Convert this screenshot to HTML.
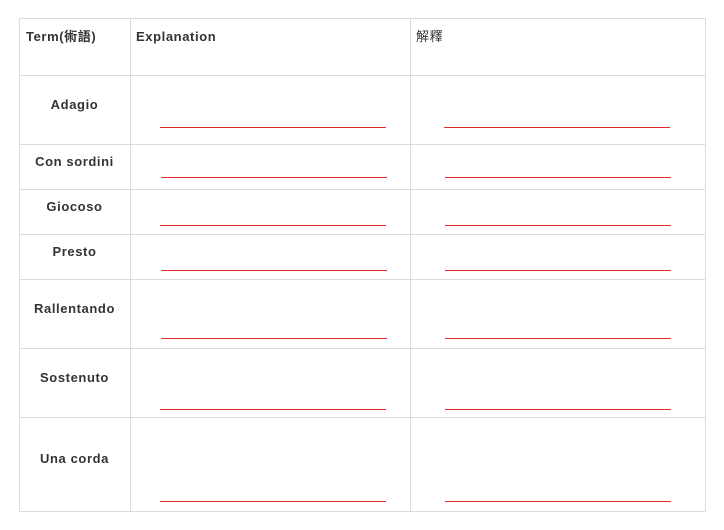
<!DOCTYPE html>
<html><head><meta charset="utf-8"><style>
html,body{margin:0;padding:0;background:#fff;width:724px;height:530px;overflow:hidden;position:relative}
.h,.v{position:absolute;background:#dcdcdc}
.h{height:1px;left:19px;width:687px}
.v{width:1px;top:18px;height:494px}
.r{position:absolute;height:1px;background:#e32b2b}
.t{position:absolute;font:bold 13px "Liberation Sans","Noto Sans CJK TC",sans-serif;color:#333;letter-spacing:0.6px;white-space:nowrap;line-height:16px}
.c{left:19px;width:111px;text-align:center}
</style></head><body>
<div class="h" style="top:18px"></div>
<div class="h" style="top:75px"></div>
<div class="h" style="top:144px"></div>
<div class="h" style="top:189px"></div>
<div class="h" style="top:234px"></div>
<div class="h" style="top:279px"></div>
<div class="h" style="top:348px"></div>
<div class="h" style="top:417px"></div>
<div class="h" style="top:511px"></div>
<div class="v" style="left:19px"></div>
<div class="v" style="left:130px"></div>
<div class="v" style="left:410px"></div>
<div class="v" style="left:705px"></div>

<div class="t" style="left:26px;top:29px">Term(術語)</div>
<div class="t" style="left:136px;top:29px">Explanation</div>
<div class="t" style="left:416px;top:29px;font-weight:normal">解釋</div>

<div class="t c" style="top:97px">Adagio</div>
<div class="t c" style="top:154px">Con sordini</div>
<div class="t c" style="top:199px">Giocoso</div>
<div class="t c" style="top:244px">Presto</div>
<div class="t c" style="top:301px">Rallentando</div>
<div class="t c" style="top:370px">Sostenuto</div>
<div class="t c" style="top:451px">Una corda</div>

<div class="r" style="left:160px;width:226px;top:127px"></div>
<div class="r" style="left:444px;width:226px;top:127px"></div>
<div class="r" style="left:161px;width:226px;top:177px"></div>
<div class="r" style="left:445px;width:226px;top:177px"></div>
<div class="r" style="left:160px;width:226px;top:225px"></div>
<div class="r" style="left:445px;width:226px;top:225px"></div>
<div class="r" style="left:161px;width:226px;top:270px"></div>
<div class="r" style="left:445px;width:226px;top:270px"></div>
<div class="r" style="left:161px;width:226px;top:338px"></div>
<div class="r" style="left:445px;width:226px;top:338px"></div>
<div class="r" style="left:160px;width:226px;top:409px"></div>
<div class="r" style="left:445px;width:226px;top:409px"></div>
<div class="r" style="left:160px;width:226px;top:501px"></div>
<div class="r" style="left:445px;width:226px;top:501px"></div>
</body></html>
